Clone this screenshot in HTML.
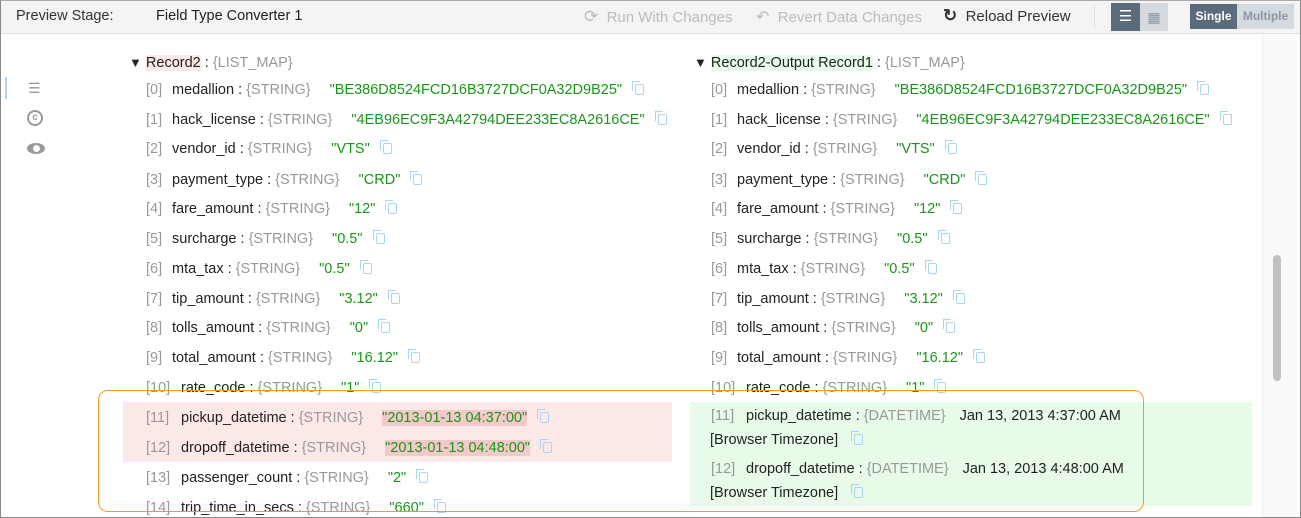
<!DOCTYPE html>
<html><head><meta charset="utf-8"><style>
*{margin:0;padding:0;box-sizing:border-box}
body{width:1301px;height:518px;overflow:hidden;background:#fff;font-family:"Liberation Sans",sans-serif;font-size:14.5px;color:#222;position:relative}
.frame{position:absolute;left:0;top:0;width:1301px;height:518px;border:1px solid #888;border-top:1px solid #aaa}
.tb{position:absolute;left:1px;top:1px;width:1299px;height:33px;background:#f4f4f4;border-bottom:1px solid #e0e0e0}
.a{position:absolute;white-space:nowrap}
.row{position:absolute;white-space:nowrap;height:20px;line-height:20px;transform:translateY(-10px)}
.i{color:#999;display:inline-block;width:26px}
.i2{color:#999;display:inline-block;width:35px}
.t{color:#999}
.v{color:#1a951a;margin-left:19px}
.c{display:inline-block;width:9px;height:11px;border:1.5px solid #a9d4f5;border-radius:2px;margin-left:13px;vertical-align:-1px;position:relative}
.c:before{content:"";position:absolute;left:-4px;top:-4px;width:7px;height:9px;border-left:1.5px solid #a9d4f5;border-top:1.5px solid #a9d4f5}
.hl{background:#f4c9c9}
</style></head><body>
<div class="tb"></div>
<div class="a" style="left:16px;top:8px;font-size:14.5px;color:#333">Preview Stage:</div>
<div class="a" style="left:156px;top:8px;font-size:14.5px;color:#222">Field Type Converter 1</div>
<div class="a" style="left:584px;top:7px;color:#b8bcc0;font-size:15px"><span style="font-size:17px">⟳</span>&nbsp; Run With Changes</div>
<div class="a" style="left:756px;top:7px;color:#b8bcc0;font-size:15px"><span style="font-size:16px">↶</span>&nbsp; Revert Data Changes</div>
<div class="a" style="left:943px;top:6px;color:#333;font-size:15px"><span style="font-size:17px;font-weight:bold">↻</span>&nbsp; Reload Preview</div>
<div class="a" style="left:1094px;top:6px;width:1px;height:22px;background:#ddd"></div>
<div class="a" style="left:1111px;top:3px;width:29px;height:28px;background:#5b6b7c;color:#fff;text-align:center;line-height:28px;font-size:15px">☰</div>
<div class="a" style="left:1140px;top:3px;width:28px;height:28px;background:#d5dadf;color:#8a96a2;text-align:center;line-height:28px;font-size:14px">▦</div>
<div class="a" style="left:1190px;top:4px;width:47px;height:25px;background:#5b6b7c;color:#fff;text-align:center;line-height:25px;font-size:12px;font-weight:bold">Single</div>
<div class="a" style="left:1237px;top:4px;width:57px;height:25px;background:#d5dadf;color:#8a96a2;text-align:center;line-height:25px;font-size:12px;font-weight:bold">Multiple</div>

<div class="a" style="left:5px;top:77px;width:2px;height:22px;background:#a9d4f5"></div>
<div class="a" style="left:28px;top:80px;color:#999;font-size:14px">☰</div>
<div class="a" style="left:27px;top:110px;width:16px;height:16px;border:2px solid #999;border-radius:50%;color:#999;font-size:10px;font-weight:bold;text-align:center;line-height:12px">c</div>
<div class="a" style="left:27px;top:143px;width:18px;height:11px;background:#999;border-radius:50%"></div>
<div class="a" style="left:33px;top:145px;width:7px;height:7px;background:#fff;border-radius:50%"></div>

<div class="a" style="left:1262px;top:34px;width:37px;height:483px;background:#fafafa;border-left:1px solid #eee"></div>
<div class="a" style="left:1273px;top:255px;width:8px;height:126px;background:#c1c1c1;border-radius:4px"></div>

<div class="a" style="left:123px;top:402px;width:549px;height:60px;background:#fde8e8"></div>
<div class="a" style="left:690px;top:402px;width:562px;height:104px;background:#e8fbe8"></div>

<div class="row" style="left:129px;top:63px"><span style="font-size:13px">▼</span> <span style="background:#fde8e8">Record2</span> : <span class="t">{LIST_MAP}</span></div>
<div class="row" style="left:694px;top:63px"><span style="font-size:13px">▼</span> <span style="background:#e8fbe8">Record2-Output Record1</span> : <span class="t">{LIST_MAP}</span></div>

<div class="row" style="left:146px;top:90px"><span class="i">[0]</span>medallion : <span class="t">{STRING}</span><span class="v">"BE386D8524FCD16B3727DCF0A32D9B25"</span><span class="c"></span></div>
<div class="row" style="left:146px;top:120px"><span class="i">[1]</span>hack_license : <span class="t">{STRING}</span><span class="v">"4EB96EC9F3A42794DEE233EC8A2616CE"</span><span class="c"></span></div>
<div class="row" style="left:146px;top:149px"><span class="i">[2]</span>vendor_id : <span class="t">{STRING}</span><span class="v">"VTS"</span><span class="c"></span></div>
<div class="row" style="left:146px;top:180px"><span class="i">[3]</span>payment_type : <span class="t">{STRING}</span><span class="v">"CRD"</span><span class="c"></span></div>
<div class="row" style="left:146px;top:209px"><span class="i">[4]</span>fare_amount : <span class="t">{STRING}</span><span class="v">"12"</span><span class="c"></span></div>
<div class="row" style="left:146px;top:239px"><span class="i">[5]</span>surcharge : <span class="t">{STRING}</span><span class="v">"0.5"</span><span class="c"></span></div>
<div class="row" style="left:146px;top:269px"><span class="i">[6]</span>mta_tax : <span class="t">{STRING}</span><span class="v">"0.5"</span><span class="c"></span></div>
<div class="row" style="left:146px;top:299px"><span class="i">[7]</span>tip_amount : <span class="t">{STRING}</span><span class="v">"3.12"</span><span class="c"></span></div>
<div class="row" style="left:146px;top:328px"><span class="i">[8]</span>tolls_amount : <span class="t">{STRING}</span><span class="v">"0"</span><span class="c"></span></div>
<div class="row" style="left:146px;top:358px"><span class="i">[9]</span>total_amount : <span class="t">{STRING}</span><span class="v">"16.12"</span><span class="c"></span></div>
<div class="row" style="left:146px;top:388px"><span class="i2">[10]</span>rate_code : <span class="t">{STRING}</span><span class="v">"1"</span><span class="c"></span></div>
<div class="row" style="left:146px;top:418px"><span class="i2">[11]</span>pickup_datetime : <span class="t">{STRING}</span><span class="v hl">"2013-01-13 04:37:00"</span><span class="c"></span></div>
<div class="row" style="left:146px;top:448px"><span class="i2">[12]</span>dropoff_datetime : <span class="t">{STRING}</span><span class="v hl">"2013-01-13 04:48:00"</span><span class="c"></span></div>
<div class="row" style="left:146px;top:478px"><span class="i2">[13]</span>passenger_count : <span class="t">{STRING}</span><span class="v">"2"</span><span class="c"></span></div>
<div class="row" style="left:146px;top:508px"><span class="i2">[14]</span>trip_time_in_secs : <span class="t">{STRING}</span><span class="v">"660"</span><span class="c"></span></div>

<div class="row" style="left:711px;top:90px"><span class="i">[0]</span>medallion : <span class="t">{STRING}</span><span class="v">"BE386D8524FCD16B3727DCF0A32D9B25"</span><span class="c"></span></div>
<div class="row" style="left:711px;top:120px"><span class="i">[1]</span>hack_license : <span class="t">{STRING}</span><span class="v">"4EB96EC9F3A42794DEE233EC8A2616CE"</span><span class="c"></span></div>
<div class="row" style="left:711px;top:149px"><span class="i">[2]</span>vendor_id : <span class="t">{STRING}</span><span class="v">"VTS"</span><span class="c"></span></div>
<div class="row" style="left:711px;top:180px"><span class="i">[3]</span>payment_type : <span class="t">{STRING}</span><span class="v">"CRD"</span><span class="c"></span></div>
<div class="row" style="left:711px;top:209px"><span class="i">[4]</span>fare_amount : <span class="t">{STRING}</span><span class="v">"12"</span><span class="c"></span></div>
<div class="row" style="left:711px;top:239px"><span class="i">[5]</span>surcharge : <span class="t">{STRING}</span><span class="v">"0.5"</span><span class="c"></span></div>
<div class="row" style="left:711px;top:269px"><span class="i">[6]</span>mta_tax : <span class="t">{STRING}</span><span class="v">"0.5"</span><span class="c"></span></div>
<div class="row" style="left:711px;top:299px"><span class="i">[7]</span>tip_amount : <span class="t">{STRING}</span><span class="v">"3.12"</span><span class="c"></span></div>
<div class="row" style="left:711px;top:328px"><span class="i">[8]</span>tolls_amount : <span class="t">{STRING}</span><span class="v">"0"</span><span class="c"></span></div>
<div class="row" style="left:711px;top:358px"><span class="i">[9]</span>total_amount : <span class="t">{STRING}</span><span class="v">"16.12"</span><span class="c"></span></div>
<div class="row" style="left:711px;top:388px"><span class="i2">[10]</span>rate_code : <span class="t">{STRING}</span><span class="v">"1"</span><span class="c"></span></div>
<div class="row" style="left:711px;top:416px"><span class="i2">[11]</span>pickup_datetime : <span class="t">{DATETIME}</span><span style="margin-left:14px">Jan 13, 2013 4:37:00 AM</span></div>
<div class="row" style="left:710px;top:440px">[Browser Timezone]<span class="c" style="margin-left:16px"></span></div>
<div class="row" style="left:711px;top:469px"><span class="i2">[12]</span>dropoff_datetime : <span class="t">{DATETIME}</span><span style="margin-left:14px">Jan 13, 2013 4:48:00 AM</span></div>
<div class="row" style="left:710px;top:493px">[Browser Timezone]<span class="c" style="margin-left:16px"></span></div>

<div class="a" style="left:98px;top:390px;width:1046px;height:122px;border:1.5px solid #f39a1e;border-radius:10px"></div>
<div class="frame"></div>
</body></html>
